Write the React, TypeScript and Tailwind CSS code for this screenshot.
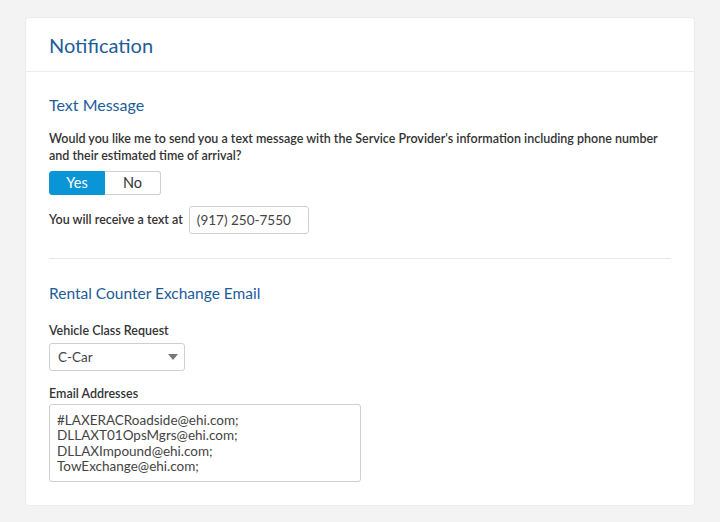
const font = { fontFamily: 'Lato, "Open Sans", "Liberation Sans", sans-serif' }

export default function App() {
  return (
    <div className="min-h-[522px] bg-[#f3f3f3] pt-[17px] px-[25px] pb-[17px]" style={font}>
      <div className="bg-white rounded-[4px] border border-[#ececec]">
        <div className="h-[54px] px-[23px] flex items-center border-b border-[#ececec]">
          <h1 className="text-[20px] text-[#1d5c9a] leading-none">Notification</h1>
        </div>
        <div className="px-[23px] pb-[23px]">
          <h2 className="mt-[24px] text-[16px] leading-[18px] text-[#1d5c9a]">Text Message</h2>
          <p className="mt-[16px] text-[12.5px] leading-[17px] font-semibold text-[#333]">
            Would you like me to send you a text message with the Service Provider's information including phone number
            and their estimated time of arrival?
          </p>
          <div className="mt-[7px] flex w-[112px] h-[24px] text-[14.5px]">
            <button className="w-[56px] bg-[#0a96d6] text-white rounded-l-[3px] border border-[#0a96d6]">Yes</button>
            <button className="flex-1 bg-white text-[#333] rounded-r-[3px] border border-l-0 border-[#cfcfcf]">No</button>
          </div>
          <div className="mt-[11px] flex items-center gap-[6px]">
            <span className="text-[12.5px] font-semibold text-[#333]">You will receive a text at</span>
            <div className="w-[120px] h-[28px] border border-[#cfcfcf] rounded-[3px] px-[7px] flex items-center text-[13.5px] text-[#444]">
              (917) 250-7550
            </div>
          </div>
          <div className="mt-[24px] border-t border-[#e8e8e8]" />
          <h2 className="mt-[25px] text-[15.5px] leading-[18px] text-[#1d5c9a]">Rental Counter Exchange Email</h2>
          <p className="mt-[21px] text-[12.5px] leading-[16px] font-semibold text-[#333]">Vehicle Class Request</p>
          <div className="mt-[4px] w-[136px] h-[28px] border border-[#cfcfcf] rounded-[3px] pl-[8px] pr-[6px] flex items-center justify-between text-[13.5px] text-[#444]">
            <span>C-Car</span>
            <svg width="10" height="6" viewBox="0 0 10 6"><path d="M0 0h10L5 6z" fill="#777" /></svg>
          </div>
          <p className="mt-[15px] text-[12.5px] leading-[16px] font-semibold text-[#333]">Email Addresses</p>
          <div className="mt-[2px] w-[312px] h-[78px] border border-[#cfcfcf] rounded-[3px] px-[7px] pt-[8px] text-[13.5px] leading-[15.4px] text-[#444]">
            <div>#LAXERACRoadside@ehi.com;</div>
            <div>DLLAXT01OpsMgrs@ehi.com;</div>
            <div>DLLAXImpound@ehi.com;</div>
            <div>TowExchange@ehi.com;</div>
          </div>
        </div>
      </div>
    </div>
  )
}
